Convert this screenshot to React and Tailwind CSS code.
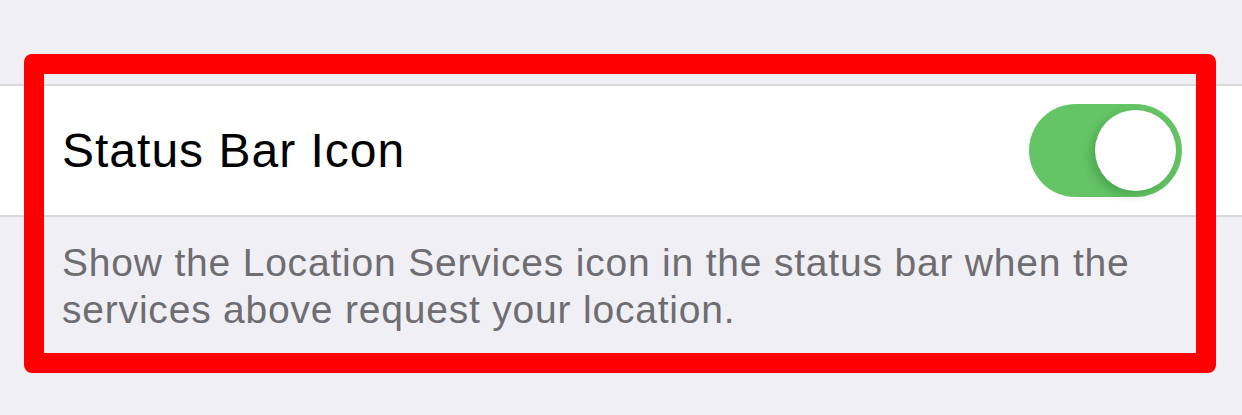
import React from "react";

function Toggle() {
  return (
    <div className="relative h-[93px] w-[153px] rounded-full bg-[#65c466]">
      <div className="absolute right-[6px] top-[6px] h-[81px] w-[81px] rounded-full bg-white shadow-[-4px_4px_10px_rgba(0,80,0,0.25)]" />
    </div>
  );
}

export default function App() {
  return (
    <div
      className="relative h-[415px] w-[1242px] overflow-hidden bg-[#efeff4]"
      style={{ fontFamily: '"Liberation Sans", Arial, sans-serif' }}
    >
      <div className="h-[84px]" />
      <div className="flex h-[133px] items-center justify-between border-y-2 border-[#d8d8dd] bg-white pl-[62px] pr-[60px]">
        <span className="text-[48px] tracking-[1px] text-black">Status Bar Icon</span>
        <Toggle />
      </div>
      <p className="pl-[62px] pt-[22px] text-[39px] leading-[47px] tracking-[0.8px] text-[#6d6d72]">
        Show the Location Services icon in the status bar when the
        <br />
        services above request your location.
      </p>

      <div className="pointer-events-none absolute left-[24px] top-[54px] h-[319px] w-[1192px] rounded-[8px] border-[20px] border-[#ff0000]" />
    </div>
  );
}
